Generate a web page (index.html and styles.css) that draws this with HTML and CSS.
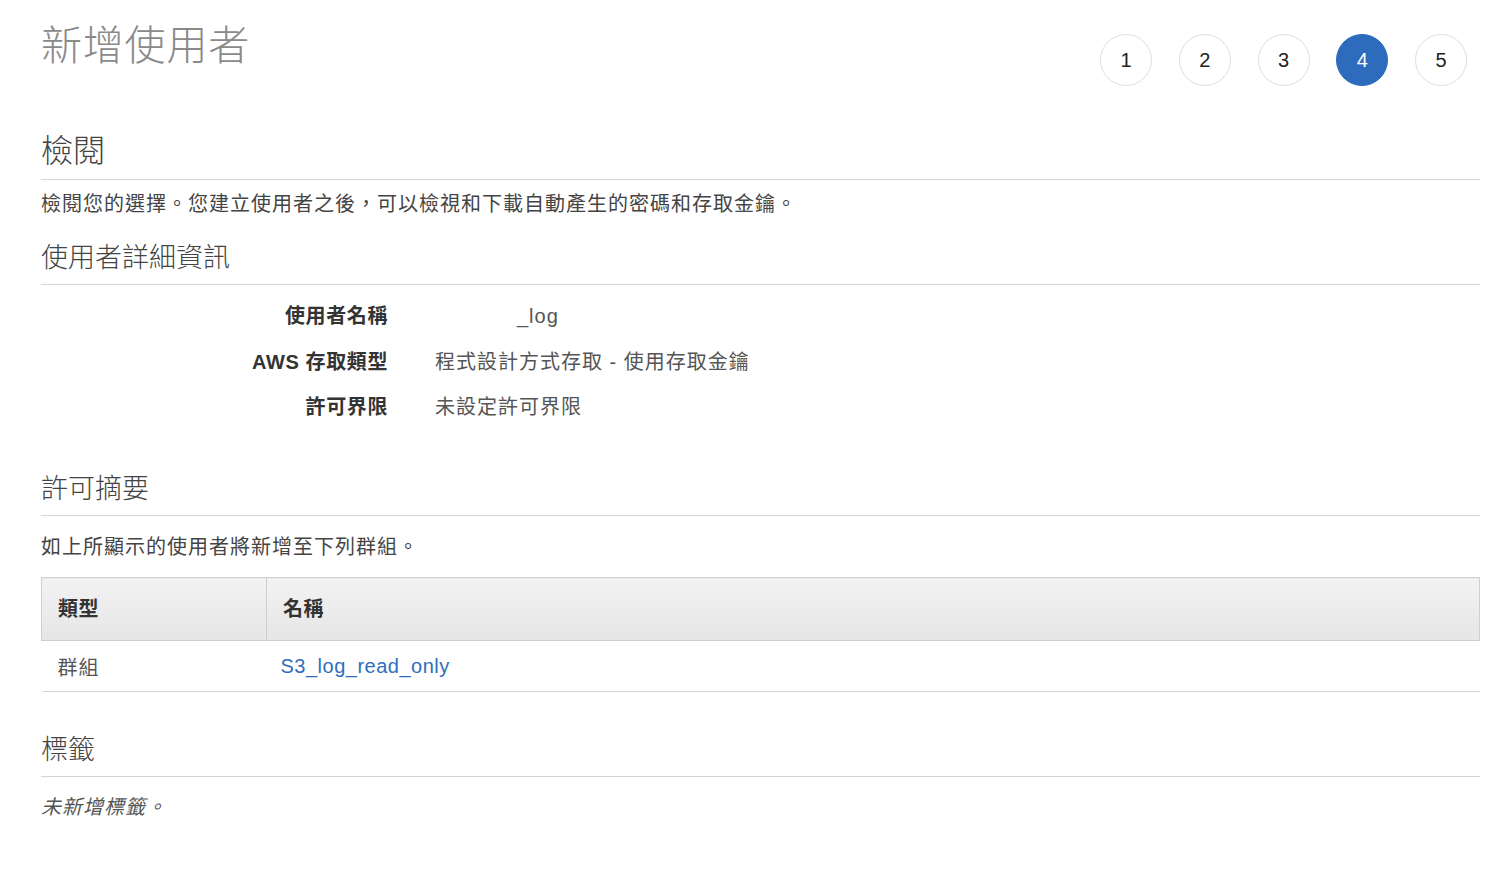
FILE: index.html
```html
<!DOCTYPE html>
<html lang="zh-Hant">
<head>
    <meta charset="UTF-8">
    <title>新增使用者</title>
    <link rel="stylesheet" href="styles.css">
</head>
<body>
    <div class="page">
        <div class="page-header">
            <h1>新增使用者</h1>
            <div class="steps">
                <div class="step">1</div>
                <div class="step">2</div>
                <div class="step">3</div>
                <div class="step active">4</div>
                <div class="step">5</div>
            </div>
        </div>

        <h2 class="review-title">檢閱</h2>
        <p class="desc first">檢閱您的選擇。您建立使用者之後，可以檢視和下載自動產生的密碼和存取金鑰。</p>

        <h3 class="section-title details-title">使用者詳細資訊</h3>
        <div class="details">
            <div class="label">使用者名稱</div>
            <div class="value"><span class="redacted"></span>_log</div>
            <div class="label">AWS 存取類型</div>
            <div class="value">程式設計方式存取 - 使用存取金鑰</div>
            <div class="label">許可界限</div>
            <div class="value">未設定許可界限</div>
        </div>

        <h3 class="section-title perm-title">許可摘要</h3>
        <p class="desc second">如上所顯示的使用者將新增至下列群組。</p>

        <table class="groups">
            <thead>
                <tr>
                    <th class="col-type">類型</th>
                    <th>名稱</th>
                </tr>
            </thead>
            <tbody>
                <tr>
                    <td>群組</td>
                    <td class="name-cell"><a href="#">S3_log_read_only</a></td>
                </tr>
            </tbody>
        </table>

        <h3 class="section-title tags-title">標籤</h3>
        <p class="desc empty">未新增標籤。</p>
    </div>
</body>
</html>
```

FILE: styles.css
```css
body {
    margin: 0;
    background: #fff;
    color: #444;
    font-family: "Liberation Sans", "Noto Sans CJK TC", sans-serif;
    font-size: 20px;
    letter-spacing: 1px;
}

.page {
    padding: 0 17px 40px 41px;
}

/* header with wizard steps */
.page-header {
    display: flex;
    justify-content: space-between;
    align-items: flex-start;
    padding-top: 22px;
}

h1 {
    margin: 0;
    font-size: 41px;
    line-height: 49px;
    font-weight: 300;
    letter-spacing: 0.8px;
    color: #8a8a8a;
}

.steps {
    display: flex;
    gap: 26.75px;
    margin-top: 12px;
    margin-right: 13px;
}

.step {
    width: 50px;
    height: 50px;
    border: 1px solid #dedede;
    border-radius: 50%;
    display: flex;
    align-items: center;
    justify-content: center;
    font-size: 20px;
    letter-spacing: 0;
    color: #222;
}

.step.active {
    background: #2d6bbd;
    border-color: #2d6bbd;
    color: #fff;
}

/* section titles */
.review-title {
    margin: 46px 0 0;
    font-size: 32px;
    line-height: 38px;
    font-weight: 300;
    letter-spacing: 0;
    color: #444;
    padding-bottom: 9px;
    border-bottom: 1px solid #d5d5d5;
}

.section-title {
    margin: 0;
    font-size: 27px;
    line-height: 32px;
    font-weight: 300;
    letter-spacing: 0;
    color: #444;
    padding-bottom: 10px;
    border-bottom: 1px solid #d5d5d5;
}

.details-title { margin-top: 24px; }
.perm-title { margin-top: 52px; }
.tags-title { margin-top: 42px; }

.desc {
    margin: 0;
    line-height: 28px;
    color: #444;
}

.desc.first { margin-top: 10px; }
.desc.second { margin-top: 17px; }
.desc.empty {
    margin-top: 16px;
    font-style: italic;
    color: #555;
}

/* user details */
.details {
    display: grid;
    grid-template-columns: 347px 1fr;
    column-gap: 47px;
    row-gap: 17.5px;
    margin-top: 17px;
    line-height: 28px;
}

.details .label {
    text-align: right;
    font-weight: bold;
    letter-spacing: 0.6px;
    color: #333;
}

.details .value {
    color: #555;
}

.redacted {
    display: inline-block;
    width: 82px;
}

/* groups table */
.groups {
    width: 100%;
    margin-top: 16px;
    border-collapse: collapse;
}

.groups th {
    height: 59px;
    padding: 0 16px 3px;
    text-align: left;
    font-weight: bold;
    letter-spacing: 0.5px;
    color: #333;
    background: linear-gradient(#f2f2f2, #e6e6e6);
    border: 1px solid #cfcfcf;
}

.groups th.col-type {
    width: 192px;
}

.groups td {
    height: 50px;
    padding: 0 16px;
    color: #555;
    border-bottom: 1px solid #d5d5d5;
}

.groups td.name-cell {
    padding-left: 14px;
}

.groups a {
    color: #2f6ebd;
    letter-spacing: 0.5px;
    text-decoration: none;
}
```
